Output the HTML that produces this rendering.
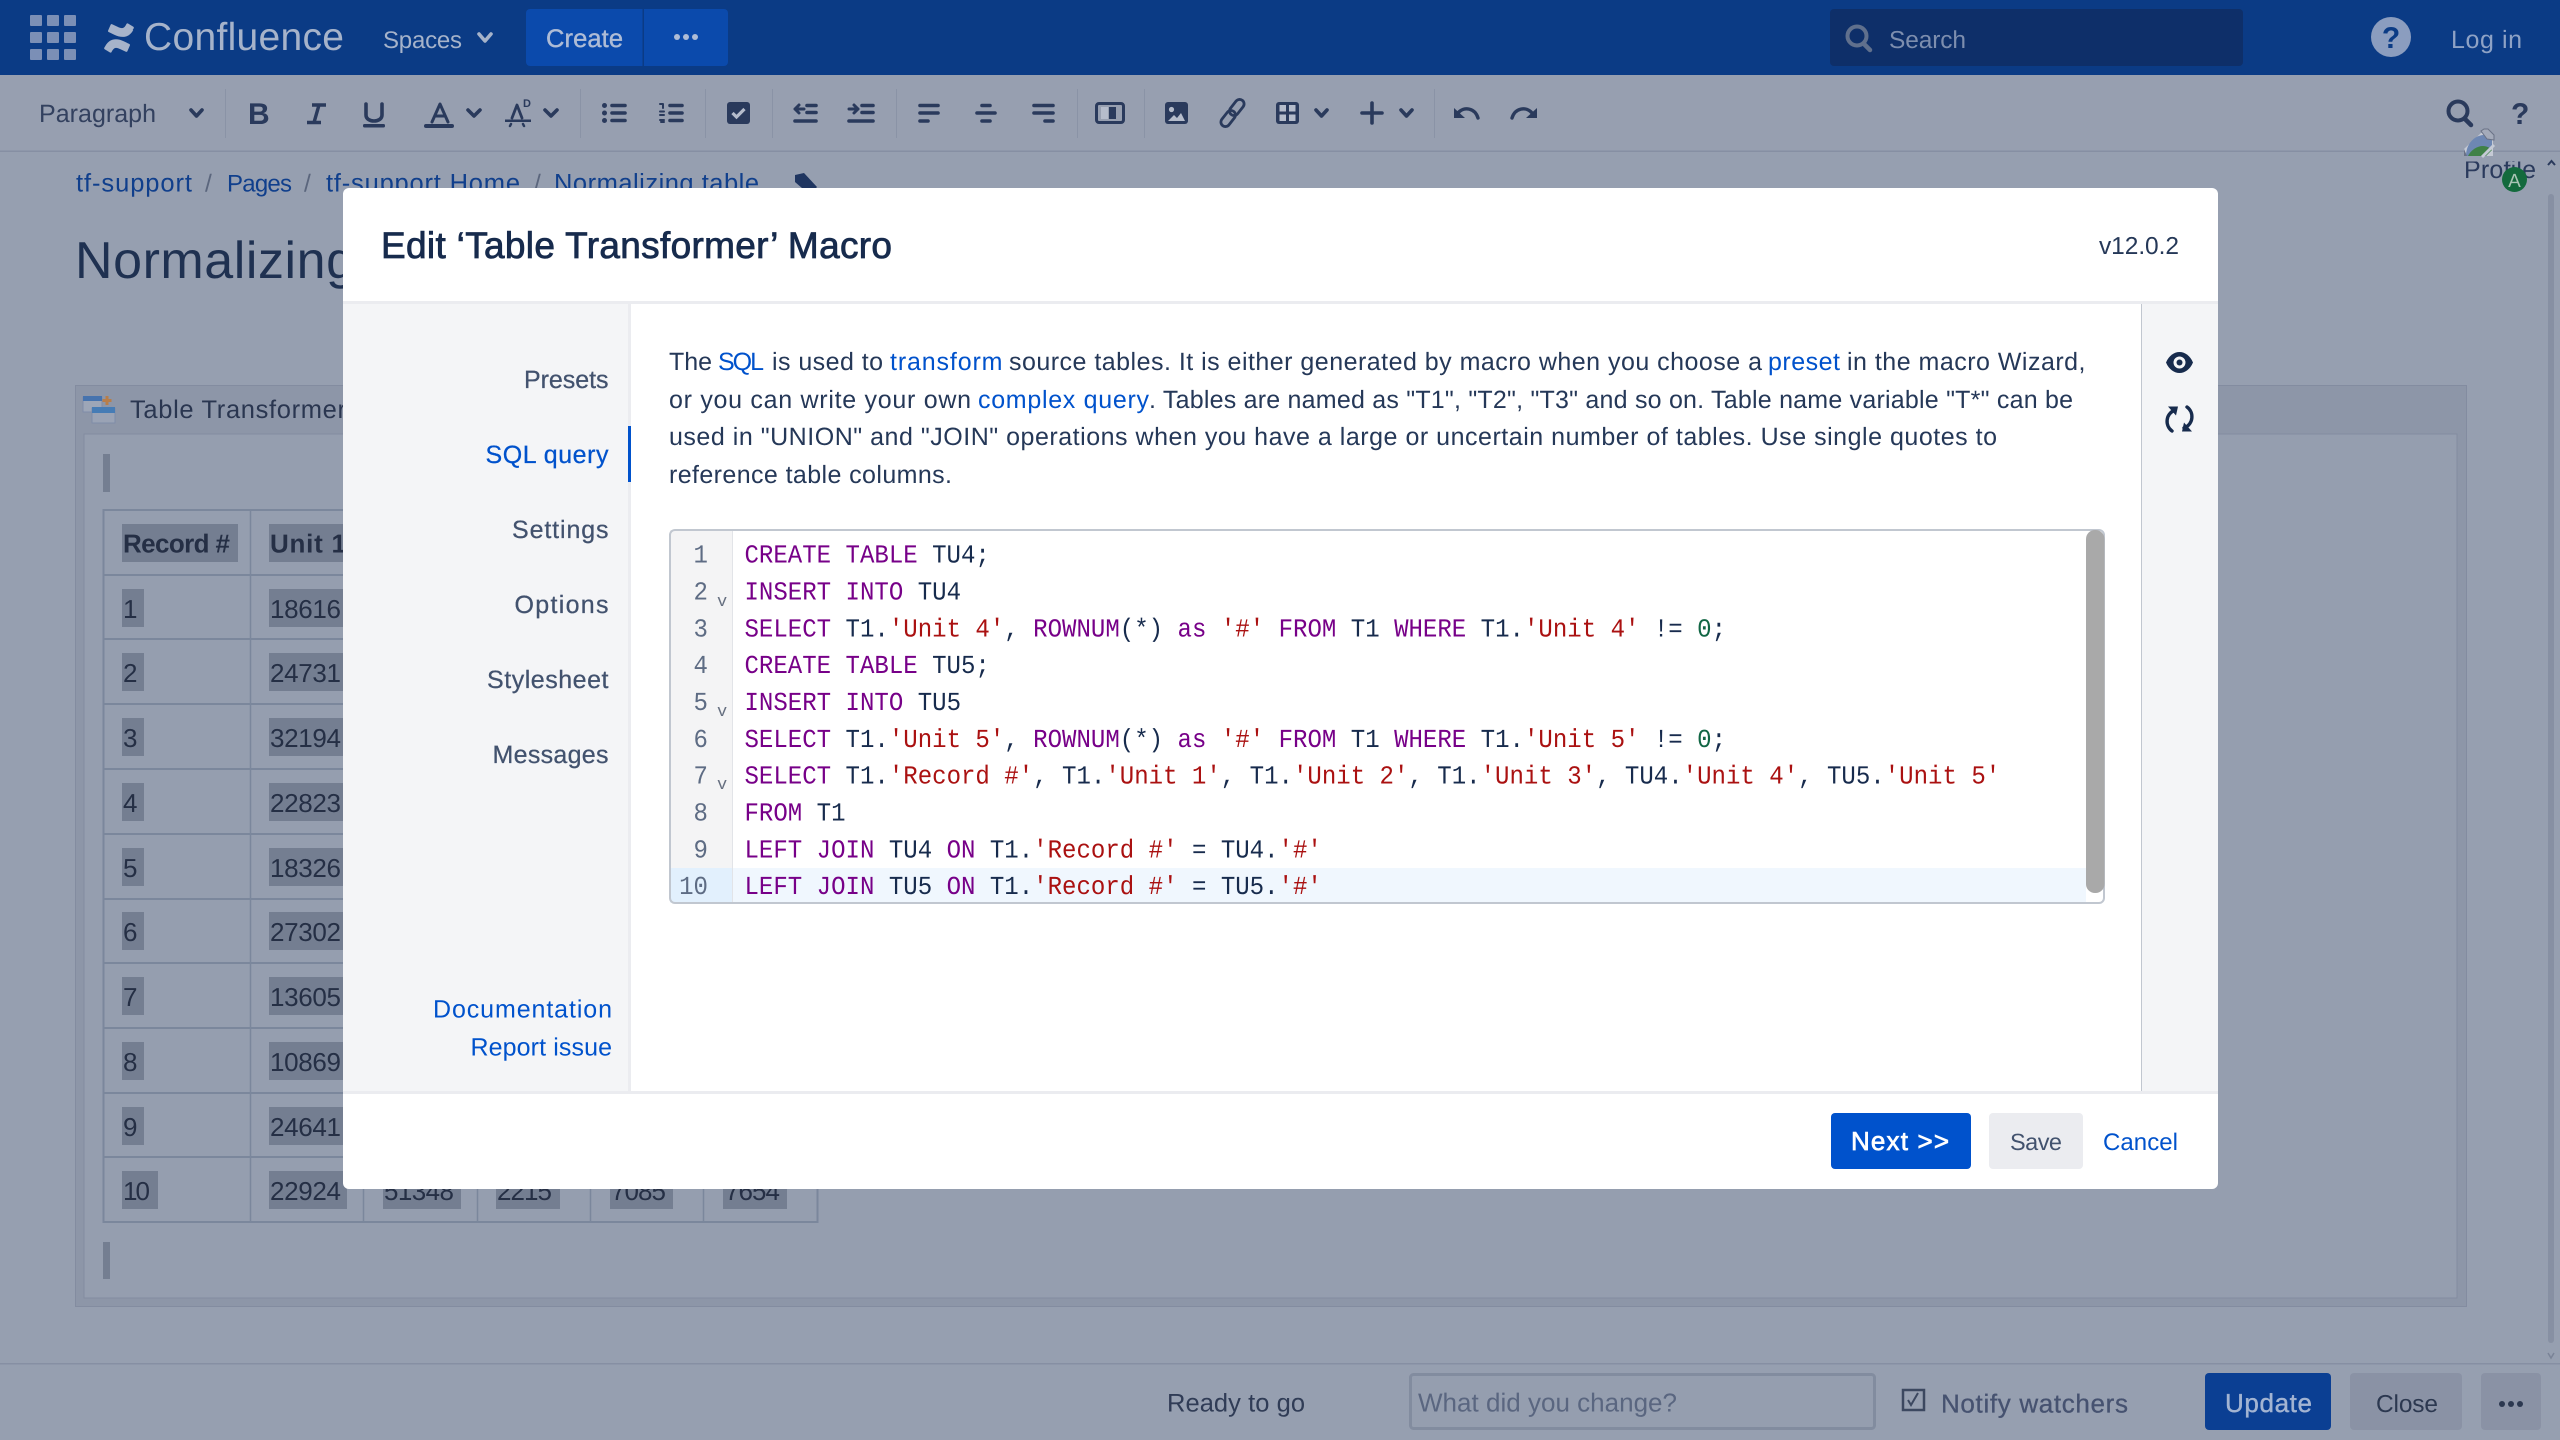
<!DOCTYPE html>
<html lang="en">
<head>
<meta charset="utf-8">
<title>Edit Table Transformer Macro</title>
<style>
html,body{margin:0;padding:0;background:#969fb0;width:2560px;height:1440px;overflow:hidden}
svg{display:block;font-family:"Liberation Sans",Arial,sans-serif;text-rendering:geometricPrecision}
.cell{font-size:26px;fill:#252f45}
.hl{fill:#747e91}
.ln{fill:none;stroke:#7b879c;stroke-width:2}
.ic{fill:none;stroke:#2a3a5c;stroke-width:3.6;stroke-linecap:round;stroke-linejoin:round}
.f{fill:#2a3a5c}
.nav{font-size:25px;fill:#42526e;stroke:#42526e;stroke-width:.25}
.p{font-size:25px;fill:#253858}
.a{font-size:25px;fill:#0052cc}
.code text{font-family:"Liberation Mono","DejaVu Sans Mono",monospace;font-size:26px;fill:#172b4d}
.k{fill:#770088}.s{fill:#aa1111}.n{fill:#116644}
.num text{font-family:"Liberation Mono","DejaVu Sans Mono",monospace;font-size:26px;fill:#5e6c84;text-anchor:end}
</style>
</head>
<body>
<svg width="2560" height="1440" viewBox="0 0 2560 1440" xmlns="http://www.w3.org/2000/svg">
<defs><clipPath id="pc"><rect x="2455" y="161.500" width="90" height="40"/></clipPath></defs>
<rect width="2560" height="1440" fill="#969fb0"/>

<!-- top nav -->
<rect width="2560" height="75" fill="#0b3b85"/>
<g fill="#7b8fb6">
<rect x="30" y="15" width="12" height="11" rx="1"/><rect x="47" y="15" width="12" height="11" rx="1"/><rect x="64" y="15" width="12" height="11" rx="1"/>
<rect x="30" y="32" width="12" height="11" rx="1"/><rect x="47" y="32" width="12" height="11" rx="1"/><rect x="64" y="32" width="12" height="11" rx="1"/>
<rect x="30" y="49" width="12" height="11" rx="1"/><rect x="47" y="49" width="12" height="11" rx="1"/><rect x="64" y="49" width="12" height="11" rx="1"/>
</g>
<g transform="translate(104 23) scale(1.25)" fill="#a6b3ca">
<path d="M1.1 18.3c-.3.5-.6 1-.9 1.5-.2.4-.1.9.3 1.2l4.3 2.6c.4.3 1 .1 1.2-.3.2-.3.4-.8.7-1.3 1.7-2.8 3.4-2.5 6.5-1l4.3 2c.5.2 1 0 1.2-.4l2-4.6c.2-.4 0-1-.4-1.2-.9-.4-2.7-1.3-4.3-2.1C10.2 11.9 4.6 12.2 1.1 18.3z"/>
<path d="M22.9 5.7c.3-.5.6-1.1.9-1.5.2-.4.1-.9-.3-1.2L19.2.4c-.4-.3-1-.1-1.2.3-.2.3-.4.8-.7 1.3-1.7 2.8-3.4 2.500-6.500 1L6.500 1c-.5-.2-1 0-1.200.4l-2 4.600c-.2.4 0 1 .4 1.200.9.4 2.700 1.300 4.300 2.100 6.300 3 11.900 2.700 15.400-3.600z"/>
</g>
<text x="144" y="50" font-size="39" fill="#a6b3ca" textLength="200">Confluence</text>
<text x="383" y="48" font-size="24" fill="#a6b3ca" textLength="79">Spaces</text>
<path d="M479 34l6 7 6-7" fill="none" stroke="#a6b3ca" stroke-width="3.6" stroke-linecap="round" stroke-linejoin="round"/>
<rect x="526" y="9" width="202" height="57" rx="4" fill="#0b4aac"/>
<rect x="642.5" y="9" width="1.5" height="57" fill="#0b3b85"/>
<text x="546" y="47" font-size="25.5" fill="#aebcd6" stroke="#aebcd6" stroke-width=".4" textLength="77">Create</text>
<g fill="#aebcd6"><circle cx="677" cy="37" r="3"/><circle cx="686" cy="37" r="3"/><circle cx="695" cy="37" r="3"/></g>
<rect x="1830" y="9" width="413" height="57" rx="4" fill="#0e2f69"/>
<circle cx="1857" cy="36" r="9.5" fill="none" stroke="#60708d" stroke-width="4"/>
<path d="M1864 44l6 6" stroke="#60708d" stroke-width="4.5" stroke-linecap="round"/>
<text x="1889" y="48" font-size="24.5" fill="#7d8eae" textLength="77">Search</text>
<circle cx="2391" cy="37" r="20" fill="#8b9dbf"/>
<text x="2391" y="48" font-size="30" font-weight="bold" fill="#0b3b85" text-anchor="middle">?</text>
<text x="2451" y="48" font-size="25" fill="#8ea2c5" textLength="71">Log in</text>

<!-- toolbar -->
<rect y="75" width="2560" height="76" fill="#979fb0"/>
<rect y="150.5" width="2560" height="1.5" fill="#868fa3"/>
<g fill="#8a93a6">
<rect x="225" y="89" width="1" height="49"/><rect x="580" y="89" width="1" height="49"/><rect x="705" y="89" width="1" height="49"/><rect x="772" y="89" width="1" height="49"/><rect x="896" y="89" width="1" height="49"/><rect x="1077" y="89" width="1" height="49"/><rect x="1144" y="89" width="1" height="49"/><rect x="1434" y="89" width="1" height="49"/>
</g>
<text x="39" y="122" font-size="25" fill="#33415f" textLength="117">Paragraph</text>
<g class="ic">
<path d="M191 110l5.5 6 5.5-6"/>
<path d="M468 110l6 6 6-6"/><path d="M545 110l6 6 6-6"/>
<path d="M1316 110l5.5 6 5.5-6"/><path d="M1401 110l5.5 6 5.5-6"/>
</g>
<text x="248" y="124" font-size="30" font-weight="bold" class="f" textLength="21">B</text>
<path class="ic" style="stroke-width:3.4;stroke-linecap:butt" d="M312 105h14M307 122.500h14M319 105l-5 17.500"/>
<path class="ic" d="M366 104v11c0 8 16 8 16 0v-11"/><rect class="f" x="363" y="124" width="22" height="3.5" rx="1.5"/>
<path class="ic" d="M432 122l8-18 8 18M435 116h10" style="stroke-width:3"/><rect class="f" x="424" y="124" width="30" height="4" rx="2"/>
<!-- font size A -->
<path class="ic" style="stroke-width:2.8" d="M512 118l5-13 5 13"/><rect class="f" x="505" y="119.5" width="26" height="2.5"/><path class="ic" style="stroke-width:2.5" d="M510 126l1-2M524 126l-1-2"/>
<text x="523" y="107" font-size="11" font-weight="bold" class="f">D</text>
<!-- bullet -->
<g class="f"><circle cx="604.5" cy="105.5" r="2.5"/><circle cx="604.5" cy="113" r="2.5"/><circle cx="604.5" cy="120.5" r="2.5"/></g>
<g class="ic"><path d="M612 105.500h13M612 113h13M612 120.500h13"/></g>
<g class="ic" style="stroke-width:2"><path d="M660 104h3v4M660 111.500h4M660 115h4M660 120h4l-3 2h3"/></g>
<g class="ic"><path d="M670 105.500h12M670 113h12M670 120.500h12"/></g>
<rect class="f" x="727" y="102" width="23" height="22" rx="3"/><path d="M732.5 113l4 4 8-8" fill="none" stroke="#b5bccb" stroke-width="3.2"/>
<!-- outdent / indent -->
<g class="ic"><path d="M807 105.500h9M807 112.500h9M795 121h21"/></g>
<g class="ic" style="stroke-width:3"><path d="M804 109h-9M799 105l-4 4 4 4"/></g>
<g class="ic"><path d="M862 105.500h11M862 112.500h11M849 121h24"/></g>
<g class="ic" style="stroke-width:3"><path d="M849 109h9M854 105l4 4-4 4"/></g>
<!-- align -->
<g class="ic">
<path d="M920 105.500h18M920 113h18M920 121h8"/>
<path d="M982 105.500h8M977 113h18M982 121h8"/>
<path d="M1034 105.500h19M1034 113h19M1045 121h8"/>
</g>
<rect x="1096.5" y="103.5" width="27" height="19" rx="2.5" fill="none" stroke="#2a3a5c" stroke-width="3"/><rect x="1101" y="107" width="7" height="12" fill="#b5bccb"/><rect class="f" x="1109" y="107" width="7" height="12"/>
<!-- image -->
<rect class="f" x="1165" y="102" width="23" height="22" rx="3"/><circle cx="1171.5" cy="109.5" r="2.6" fill="#b5bccb"/><path d="M1168 121l6-6 3 3 4-5 4 8z" fill="#b5bccb"/>
<!-- link -->
<g transform="translate(1232.5 113) rotate(-52)" fill="none" stroke="#2a3a5c" stroke-width="2.8"><rect x="-16" y="-4.5" width="18" height="9" rx="4.5"/><rect x="-2" y="-4.5" width="18" height="9" rx="4.5"/></g>
<!-- table -->
<rect class="f" x="1276" y="102" width="23" height="22" rx="3"/><g fill="#b5bccb"><rect x="1279.5" y="105" width="6.5" height="6.5"/><rect x="1289" y="105" width="6.5" height="6.5"/><rect x="1279.5" y="114.5" width="6.5" height="6.5"/><rect x="1289" y="114.5" width="6.5" height="6.5"/></g>
<path class="ic" d="M1372 103v20M1362 113h20"/>
<!-- undo / redo -->
<g class="ic" style="stroke-width:3.4"><path d="M1458 113c6-7 17-5 20 5"/><path d="M1512 118c3-10 14-12 20-5"/></g>
<path class="f" d="M1454 108v10h11z"/><path class="f" d="M1537 108v10h-11z"/>
<!-- right tools -->
<circle cx="2458" cy="111" r="9.5" fill="none" stroke="#2a3a5c" stroke-width="4"/><path d="M2465 119l6 6" stroke="#2a3a5c" stroke-width="4.5" stroke-linecap="round"/>
<text x="2511" y="124" font-size="30" font-weight="bold" fill="#2a3a5c" textLength="17">?</text>
<!-- broken image -->
<path d="M2464 156v-7l17-16h5l7 7v16z" fill="#c5cad5"/>
<path d="M2466 156c0-12 8-20 17-21l9 1v11l-10 9z" fill="#6d87b3"/>
<path d="M2468 156c3-6 9-10 15-10 4 0 7 2 9 4l-6 6z" fill="#3f8147"/>
<path d="M2482 157l12-12" stroke="#c5cad5" stroke-width="3"/>
<path d="M2481 131l3-2h4l6 6v5l-7-1z" fill="#a4abba" stroke="#6a7286" stroke-width="1"/>
<path d="M2464 149v7h3z" fill="#6a7286"/>
<g clip-path="url(#pc)"><text x="2464" y="178" font-size="25" fill="#2a3a5c" textLength="72">Profile</text></g>
<circle cx="2514.5" cy="179.5" r="12.5" fill="#136a3d"/>
<text x="2514.5" y="187" font-size="19" fill="#a9c4b5" text-anchor="middle">A</text>
<path d="M2548 165l3.5-4 3.5 4" fill="none" stroke="#2a3a5c" stroke-width="2"/>
<rect x="2548" y="194" width="6" height="1149" rx="3" fill="#8790a3"/>
<path d="M2548 1353l3 5 3-5" fill="none" stroke="#7a8397" stroke-width="1.5"/>

<!-- breadcrumbs + title -->
<g font-size="25.5" fill="#103f8c">
<text x="76" y="191.7" textLength="116">tf-support</text>
<text x="227" y="191.7" font-size="24" textLength="65">Pages</text>
<text x="326" y="191.7" textLength="194">tf-support Home</text>
<text x="554" y="191.7" textLength="205">Normalizing table</text>
</g>
<g font-size="24.5" fill="#5b667d"><text x="205" y="191.7">/</text><text x="304" y="191.7">/</text><text x="534" y="191.7">/</text></g>
<path d="M795 175l9-2 13 14-7 8-15-13z" fill="#1f3560"/>
<text x="75" y="278" font-size="52" fill="#1f3151" textLength="280">Normalizing</text>

<!-- macro placeholder -->
<rect x="75.5" y="385.5" width="2391" height="921" fill="#8d96a8" stroke="#838ca0"/>
<rect x="84" y="434" width="2373" height="864" fill="#959eaf" stroke="#838ca0"/>
<g opacity=".85">
<rect x="83" y="397" width="19" height="15" fill="#a0a9ba" stroke="#7d8ba8"/><rect x="83" y="396" width="19" height="5" fill="#3a6eb0"/>
<rect x="92" y="408" width="23" height="15" fill="#9da6b8" stroke="#7d8ba8"/><rect x="92" y="407" width="23" height="6" fill="#3a78b8"/>
<path d="M107 396v9M102.5 400.5h9" stroke="#c07a3a" stroke-width="3"/>
</g>
<text x="130" y="418" font-size="25.5" fill="#2a3650" textLength="216">Table Transformer</text>
<rect x="103" y="454" width="7" height="38" fill="#747e91"/>
<rect x="103" y="1242" width="7" height="37" fill="#747e91"/>

<!-- table -->
<g class="ln">
<rect x="103.5" y="510" width="714" height="712"/>
<path d="M103 575h715M103 639h715M103 704h715M103 769h715M103 834h715M103 899h715M103 963h715M103 1028h715M103 1093h715M103 1157h715"/>
<path d="M250.5 510v712M363.5 510v712M477.5 510v712M590.5 510v712M703.5 510v712" style="stroke-width:1.5"/>
</g>
<g class="hl">
<rect x="122" y="524" width="116" height="38"/><rect x="269" y="524" width="90" height="38"/>
<rect x="122" y="589" width="22" height="38"/><rect x="269" y="589" width="78" height="38"/>
<rect x="122" y="653" width="22" height="38"/><rect x="269" y="653" width="78" height="38"/>
<rect x="122" y="718" width="22" height="38"/><rect x="269" y="718" width="78" height="38"/>
<rect x="122" y="783" width="22" height="38"/><rect x="269" y="783" width="78" height="38"/>
<rect x="122" y="848" width="22" height="38"/><rect x="269" y="848" width="78" height="38"/>
<rect x="122" y="912" width="22" height="38"/><rect x="269" y="912" width="78" height="38"/>
<rect x="122" y="977" width="22" height="38"/><rect x="269" y="977" width="78" height="38"/>
<rect x="122" y="1042" width="22" height="38"/><rect x="269" y="1042" width="78" height="38"/>
<rect x="122" y="1107" width="22" height="38"/><rect x="269" y="1107" width="78" height="38"/>
<rect x="122" y="1171" width="36" height="38"/><rect x="269" y="1171" width="78" height="38"/>
<rect x="383" y="1171" width="78" height="38"/><rect x="496" y="1171" width="64" height="38"/><rect x="610" y="1171" width="63" height="38"/><rect x="723" y="1171" width="64" height="38"/>
</g>
<text x="123" y="552.5" font-size="26" font-weight="bold" fill="#252f45" textLength="107">Record #</text>
<text x="270" y="552.5" font-size="26" font-weight="bold" fill="#252f45" textLength="76">Unit 1</text>
<g class="cell">
<text x="123" y="618">1</text><text x="270" y="618" textLength="71">18616</text>
<text x="123" y="682">2</text><text x="270" y="682" textLength="71">24731</text>
<text x="123" y="747">3</text><text x="270" y="747" textLength="71">32194</text>
<text x="123" y="812">4</text><text x="270" y="812" textLength="71">22823</text>
<text x="123" y="877">5</text><text x="270" y="877" textLength="71">18326</text>
<text x="123" y="941">6</text><text x="270" y="941" textLength="71">27302</text>
<text x="123" y="1006">7</text><text x="270" y="1006" textLength="71">13605</text>
<text x="123" y="1071">8</text><text x="270" y="1071" textLength="71">10869</text>
<text x="123" y="1136">9</text><text x="270" y="1136" textLength="71">24641</text>
<text x="123" y="1200" textLength="27">10</text><text x="270" y="1200" textLength="71">22924</text>
<text x="384" y="1200" textLength="70">51348</text><text x="497" y="1200" textLength="55">2215</text><text x="611" y="1200" textLength="55">7085</text><text x="725" y="1200" textLength="55">7654</text>
</g>

<!-- bottom bar -->
<rect y="1363" width="2560" height="1.5" fill="#868fa3"/>
<text x="1167" y="1411.5" font-size="25.5" fill="#303c56" textLength="138">Ready to go</text>
<rect x="1410.5" y="1374.5" width="464" height="54" rx="3" fill="#959eaf" stroke="#828c9f" stroke-width="3"/>
<text x="1418" y="1411.5" font-size="26" fill="#5a6680" textLength="259">What did you change?</text>
<rect x="1903" y="1390" width="21" height="20" fill="none" stroke="#3c4860" stroke-width="2.5"/>
<path d="M1908 1400l3 5 7-12" fill="none" stroke="#3c4860" stroke-width="2"/>
<text x="1941" y="1412.5" font-size="26" fill="#465270" stroke="#465270" stroke-width=".3" textLength="187">Notify watchers</text>
<rect x="2205" y="1373" width="126" height="57" rx="4" fill="#0b3f93"/>
<text x="2225" y="1412" font-size="26" fill="#a3b4d2" stroke="#a3b4d2" stroke-width=".4" textLength="87">Update</text>
<rect x="2350" y="1373" width="112" height="57" rx="4" fill="#8a92a5"/>
<text x="2376" y="1412" font-size="24.5" fill="#2c3850" textLength="62">Close</text>
<rect x="2481" y="1373" width="60" height="57" rx="4" fill="#8a92a5"/>
<g fill="#2c3850"><circle cx="2502" cy="1404" r="3"/><circle cx="2511" cy="1404" r="3"/><circle cx="2520" cy="1404" r="3"/></g>

<!-- modal -->
<rect x="343" y="188" width="1875" height="1001" rx="6" fill="#ffffff"/>
<text x="381" y="258" font-size="37" fill="#172b4d" stroke="#172b4d" stroke-width=".8" textLength="511">Edit ‘Table Transformer’ Macro</text>
<text x="2099" y="254" font-size="24.5" fill="#253858" textLength="80">v12.0.2</text>
<rect x="343" y="301" width="1875" height="3" fill="#ebecf0"/>
<rect x="343" y="1091" width="1875" height="3" fill="#ebecf0"/>
<rect x="343" y="304" width="285" height="787" fill="#f4f5f7"/>
<rect x="628" y="304" width="3" height="787" fill="#ebecf0"/>
<rect x="628" y="426" width="3" height="56" fill="#0052cc"/>
<rect x="2142" y="304" width="76" height="787" fill="#f4f5f7"/>
<rect x="2141" y="304" width="1" height="787" fill="#c1c7d0"/>

<text class="nav" x="524" y="388" textLength="84.5">Presets</text>
<text class="nav" x="485.5" y="463" style="fill:#0052cc;stroke:#0052cc" textLength="123">SQL query</text>
<text class="nav" x="512" y="538" textLength="96.5">Settings</text>
<text class="nav" x="514.5" y="613" textLength="94">Options</text>
<text class="nav" x="487" y="688" textLength="121.5">Stylesheet</text>
<text class="nav" x="492.5" y="763" textLength="116">Messages</text>
<text class="a" x="433" y="1017.5" textLength="179">Documentation</text>
<text class="a" x="470.5" y="1055.5" textLength="141.5">Report issue</text>

<!-- description -->
<text class="p" x="669" y="370" textLength="43">The</text>
<text class="a" x="718" y="370" textLength="46">SQL</text>
<text class="p" x="772" y="370" textLength="111">is used to</text>
<text class="a" x="890" y="370" textLength="112.5">transform</text>
<text class="p" x="1009" y="370" textLength="753">source tables. It is either generated by macro when you choose a</text>
<text class="a" x="1768" y="370" textLength="72">preset</text>
<text class="p" x="1847" y="370" textLength="238.5">in the macro Wizard,</text>
<text class="p" x="669" y="408" textLength="302">or you can write your own</text>
<text class="a" x="978" y="408" textLength="171">complex query</text>
<text class="p" x="1149" y="408" textLength="924">. Tables are named as "T1", "T2", "T3" and so on. Table name variable "T*" can be</text>
<text class="p" x="669" y="445" textLength="1328">used in "UNION" and "JOIN" operations when you have a large or uncertain number of tables. Use single quotes to</text>
<text class="p" x="669" y="483" textLength="283">reference table columns.</text>

<!-- editor -->
<rect x="670" y="530" width="1434" height="372.5" rx="5" fill="#ffffff"/>
<rect x="670" y="530" width="62" height="372.5" fill="#f4f4f5"/>
<rect x="732" y="530" width="1" height="372.5" fill="#e2e4e8"/>
<rect x="670" y="868" width="62" height="34.5" fill="#e2f0fd"/>
<rect x="733" y="868" width="1353" height="34.5" fill="#f0f7fe"/>
<rect x="670" y="530" width="1434" height="373" rx="5" fill="none" stroke="#c1c7d0" stroke-width="2"/>
<rect x="2086" y="530" width="18.5" height="363" rx="9" fill="#a9a9a9"/>

<g class="num" transform="translate(708 0) scale(.925 1)">
<text y="562.7">1</text><text y="599.5">2</text><text y="636.3">3</text><text y="673.2">4</text><text y="710">5</text><text y="746.8">6</text><text y="783.7">7</text><text y="820.5">8</text><text y="857.3">9</text><text y="894">10</text>
</g>
<g font-family="Liberation Mono,monospace" font-size="17" fill="#666f80">
<text x="717" y="606">v</text><text x="717" y="716">v</text><text x="717" y="789">v</text>
</g>
<g class="code" transform="translate(744.5 0) scale(.925 1)">
<text y="562.7"><tspan class="k">CREATE TABLE</tspan> TU4;</text>
<text y="599.5"><tspan class="k">INSERT INTO</tspan> TU4</text>
<text y="636.3"><tspan class="k">SELECT</tspan> T1.<tspan class="s">'Unit 4'</tspan>, <tspan class="k">ROWNUM</tspan>(*) <tspan class="k">as</tspan> <tspan class="s">'#'</tspan> <tspan class="k">FROM</tspan> T1 <tspan class="k">WHERE</tspan> T1.<tspan class="s">'Unit 4'</tspan> != <tspan class="n">0</tspan>;</text>
<text y="673.2"><tspan class="k">CREATE TABLE</tspan> TU5;</text>
<text y="710"><tspan class="k">INSERT INTO</tspan> TU5</text>
<text y="746.8"><tspan class="k">SELECT</tspan> T1.<tspan class="s">'Unit 5'</tspan>, <tspan class="k">ROWNUM</tspan>(*) <tspan class="k">as</tspan> <tspan class="s">'#'</tspan> <tspan class="k">FROM</tspan> T1 <tspan class="k">WHERE</tspan> T1.<tspan class="s">'Unit 5'</tspan> != <tspan class="n">0</tspan>;</text>
<text y="783.7"><tspan class="k">SELECT</tspan> T1.<tspan class="s">'Record #'</tspan>, T1.<tspan class="s">'Unit 1'</tspan>, T1.<tspan class="s">'Unit 2'</tspan>, T1.<tspan class="s">'Unit 3'</tspan>, TU4.<tspan class="s">'Unit 4'</tspan>, TU5.<tspan class="s">'Unit 5'</tspan></text>
<text y="820.5"><tspan class="k">FROM</tspan> T1</text>
<text y="857.3"><tspan class="k">LEFT JOIN</tspan> TU4 <tspan class="k">ON</tspan> T1.<tspan class="s">'Record #'</tspan> = TU4.<tspan class="s">'#'</tspan></text>
<text y="894"><tspan class="k">LEFT JOIN</tspan> TU5 <tspan class="k">ON</tspan> T1.<tspan class="s">'Record #'</tspan> = TU5.<tspan class="s">'#'</tspan></text>
</g>

<!-- right rail icons -->
<path d="M2166 362.5c6-14 21-14 27 0-6 14-21 14-27 0z" fill="#172b4d"/>
<circle cx="2179.5" cy="362.5" r="6" fill="#f4f5f7"/><circle cx="2179.5" cy="362.5" r="3" fill="#172b4d"/>
<g fill="none" stroke="#172b4d" stroke-width="3.4" stroke-linecap="round">
<path d="M2175 410c-10 4-10 16-3 21"/>
<path d="M2184 428c10-4 10-16 3-21"/>
</g>
<path d="M2168 406.5l10 0-2 9z" fill="#172b4d"/><path d="M2192 431.5l-10 0 2-9z" fill="#172b4d"/>

<!-- footer buttons -->
<rect x="1831" y="1113" width="140" height="56" rx="4" fill="#0052cc"/>
<text x="1851" y="1150" font-size="26" fill="#ffffff" stroke="#ffffff" stroke-width=".7" textLength="98">Next &gt;&gt;</text>
<rect x="1989" y="1113" width="94" height="56" rx="4" fill="#ebecf0"/>
<text x="2010" y="1150" font-size="23.5" fill="#42526e" textLength="52">Save</text>
<text class="a" x="2103" y="1150" style="font-size:24px" textLength="75">Cancel</text>
</svg>
</body>
</html>
